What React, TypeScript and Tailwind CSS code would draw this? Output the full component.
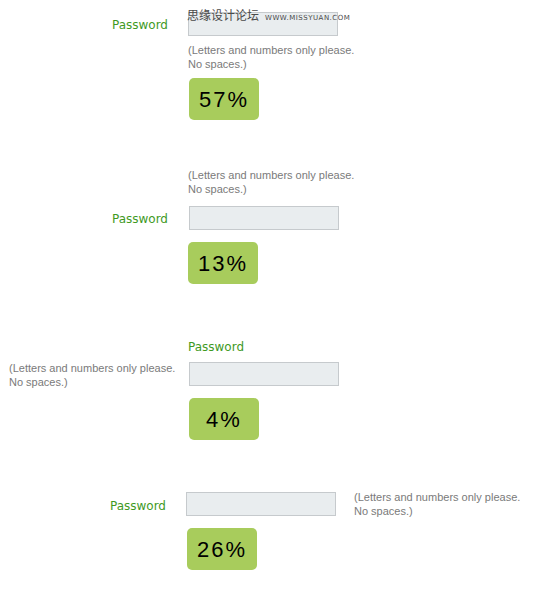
import React from "react";

const hintCls =
  "text-[11px] leading-[14px] text-[#7a7a7a] [font-family:'Liberation_Sans',Arial,sans-serif]";
const labelCls =
  "text-[12px] leading-[18px] text-[#3f9a1f] [font-family:'DejaVu_Sans',Verdana,sans-serif]";

function Hint({ className = "" }: { className?: string }) {
  return (
    <div className={`${hintCls} ${className}`}>
      (Letters and numbers only please.
      <br />
      No spaces.)
    </div>
  );
}

function Field({ className = "" }: { className?: string }) {
  return (
    <div
      className={`h-[24px] w-[150px] border border-[#c6cacd] bg-[#e9edef] ${className}`}
    />
  );
}

function Badge({ value, className = "" }: { value: string; className?: string }) {
  return (
    <div
      className={`flex h-[42px] w-[70px] items-center justify-center rounded-[5px] bg-[#a8cc5c] text-[22px] tracking-[2px] text-black [font-family:'Liberation_Sans',Arial,sans-serif] ${className}`}
    >
      {value}
    </div>
  );
}

export default function App() {
  return (
    <div className="relative h-[608px] w-[540px] overflow-hidden bg-white">
      {/* section 1 */}
      <div className="grid grid-cols-[168px_20px_auto] pt-[12px]">
        <div className={`${labelCls} flex items-center justify-end pt-[2px]`}>Password</div>
        <div />
        <Field />
        <div />
        <div />
        <Hint className="mt-[7px]" />
        <div />
        <div />
        <Badge value="57%" className="ml-[1px] mt-[7px]" />
      </div>

      {/* section 2 */}
      <div className="mt-[48px] grid grid-cols-[168px_20px_auto]">
        <div />
        <div />
        <Hint className="mb-[10px]" />
        <div className={`${labelCls} flex items-center justify-end pt-[2px]`}>Password</div>
        <div />
        <Field className="ml-[1px]" />
        <div />
        <div />
        <Badge value="13%" className="mt-[12px]" />
      </div>

      {/* section 3 */}
      <div className="mt-[54px] grid grid-cols-[188px_auto]">
        <div />
        <div className={labelCls}>Password</div>
        <div className="pl-[9px] pt-[5px]">
          <Hint />
        </div>
        <Field className="ml-[1px] mt-[6px]" />
        <div />
        <Badge value="4%" className="ml-[1px] mt-[9px]" />
      </div>

      {/* section 4 */}
      <div className="mt-[52px] grid grid-cols-[166px_20px_150px_18px_auto]">
        <div className={`${labelCls} flex items-center justify-end pt-[2px]`}>Password</div>
        <div />
        <Field />
        <div />
        <Hint className="-mt-[2px]" />
        <div />
        <div />
        <Badge value="26%" className="ml-[1px] mt-[10px]" />
      </div>

      {/* watermark */}
      <div className="absolute left-[187px] top-[7px] flex items-baseline gap-[6px]">
        <span className="text-[12px] leading-[16px] text-[#4a4a4a] [font-family:'Noto_Sans_CJK_SC',sans-serif]">
          思缘设计论坛
        </span>
        <span className="text-[7px] tracking-[0.5px] text-[#4a4a4a] [font-family:'DejaVu_Sans',sans-serif]">
          WWW.MISSYUAN.COM
        </span>
      </div>
    </div>
  );
}
